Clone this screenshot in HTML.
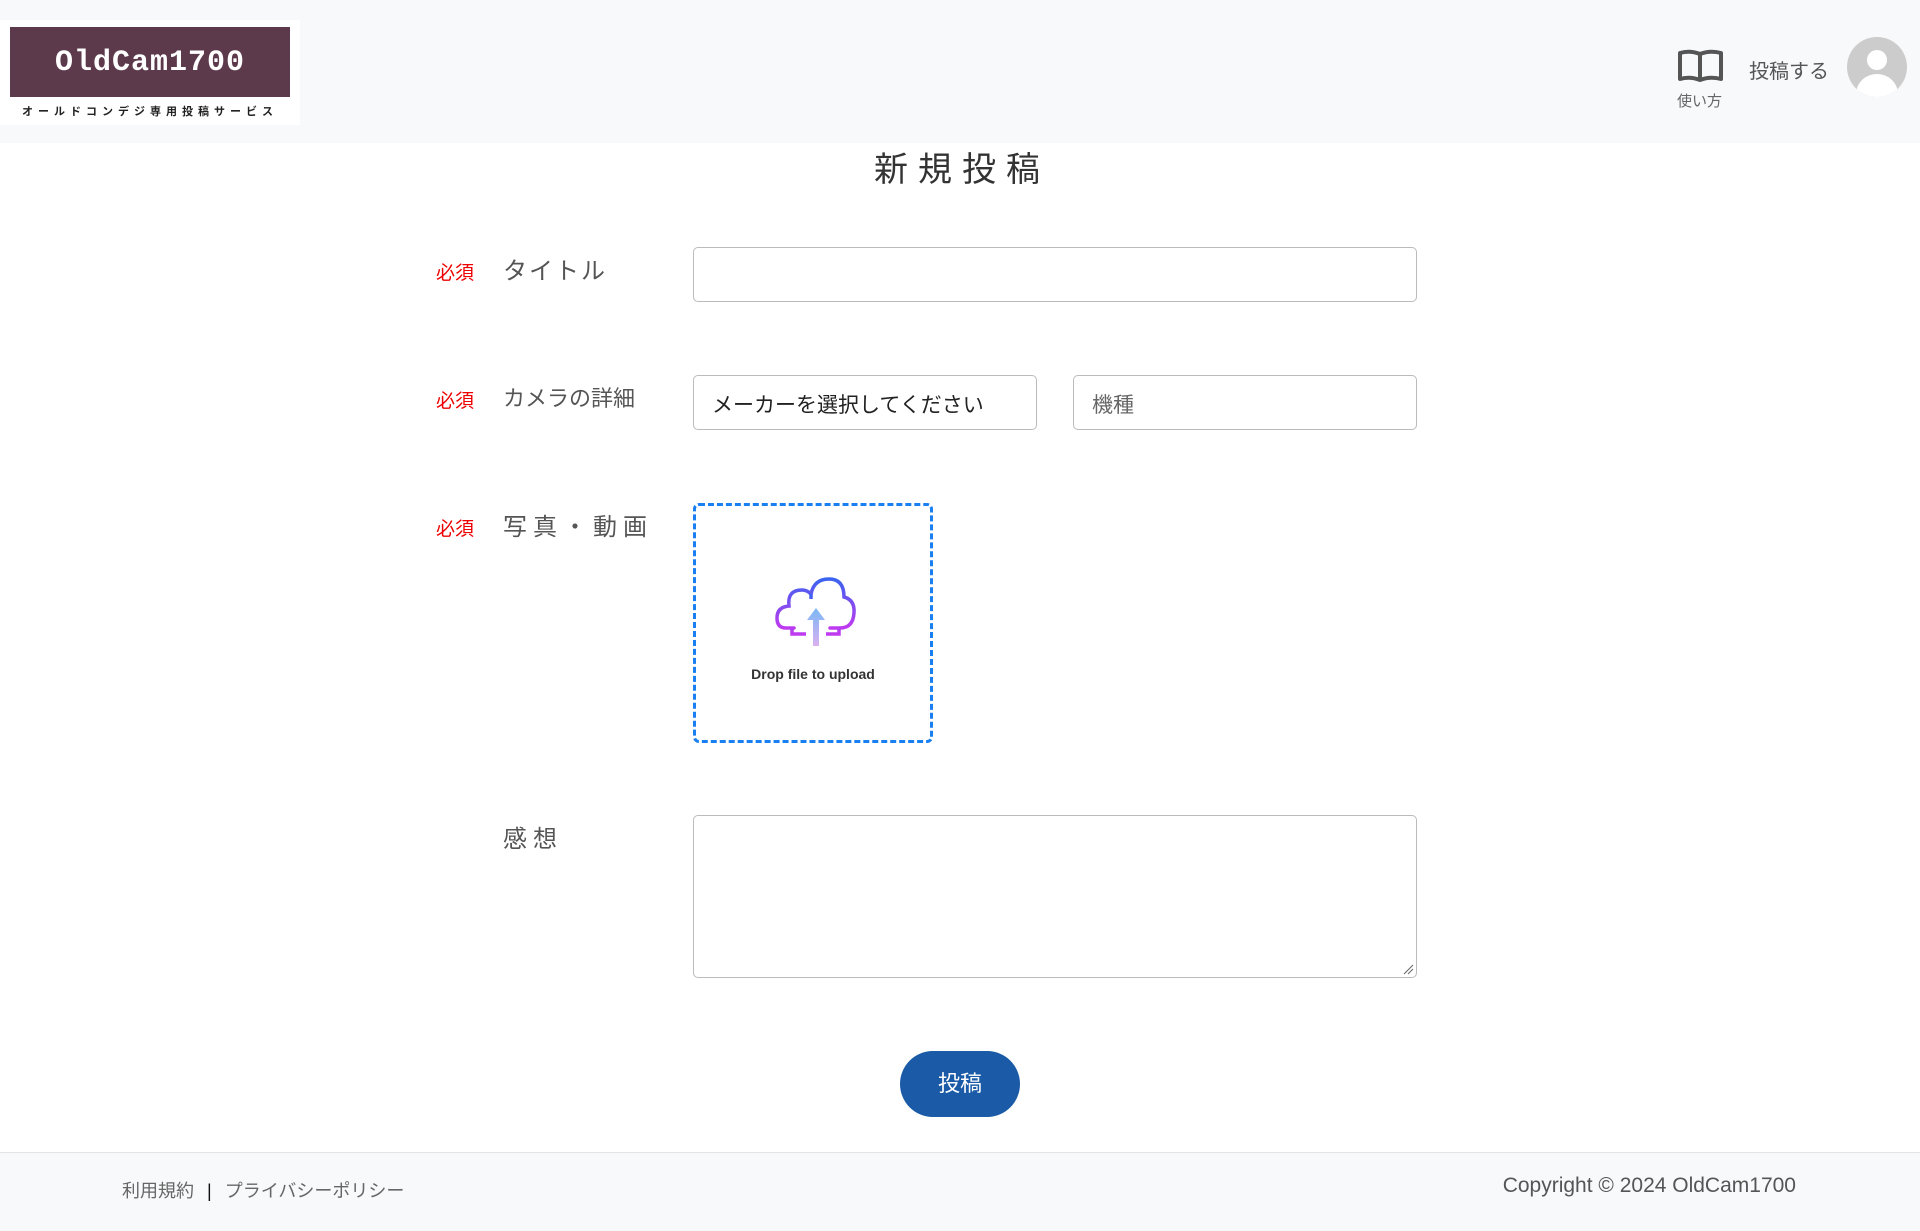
<!DOCTYPE html>
<html><head><meta charset="utf-8"><style>
*{box-sizing:border-box;margin:0;padding:0}
body{width:1920px;height:1231px;background:#fff;font-family:"Liberation Sans","Noto Sans CJK JP",sans-serif;color:#444;position:relative;overflow:hidden}
.abs{position:absolute}
header{position:absolute;left:0;top:0;width:1920px;height:143px;background:#f8f9fa}
.logo{left:0;top:20px;width:300px;height:105px;background:#fff}
.logo .in{position:absolute;left:10px;top:7px;width:280px;height:70px;background:#5c3a4b;color:#fff;font-family:"Liberation Mono",monospace;font-weight:bold;font-size:30px;text-align:center;line-height:72px;letter-spacing:1px}
.logo .sub{position:absolute;left:0;width:300px;top:83px;text-align:center;font-size:11px;font-weight:bold;letter-spacing:5px;color:#222}
.lab{font-size:24px;color:#555;letter-spacing:2px}
.req{font-size:19px;color:#e00}
.inp{border:1px solid #bbb;border-radius:5px;background:#fff}
footer{position:absolute;left:0;top:1152px;width:1920px;height:79px;background:#f8f9fa;border-top:1px solid #e3e3e3}
</style></head><body>
<header>
<div class="abs logo"><div class="in">OldCam1700</div><div class="sub">オールドコンデジ専用投稿サービス</div></div>
<svg class="abs" style="left:1677px;top:49px" width="47" height="34" viewBox="0 0 47 34"><path d="M3 4 Q13 1 23 5 Q33 1 44 4 V30 Q33 27 23 31 Q13 27 3 30 Z M23 5 V31" fill="none" stroke="#555" stroke-width="4" stroke-linejoin="round"/></svg>
<div class="abs" style="left:1677px;top:90px;font-size:15px;color:#666">使い方</div>
<div class="abs" style="left:1749px;top:55px;font-size:20px;color:#555">投稿する</div>
<div class="abs" style="left:1847px;top:37px;width:60px;height:60px;border-radius:50%;background:#ccc;overflow:hidden">
<div class="abs" style="left:20px;top:13px;width:20px;height:20px;border-radius:50%;background:#fff"></div>
<div class="abs" style="left:9px;top:37px;width:42px;height:40px;border-radius:50%;background:#fff"></div></div>
</header>
<div class="abs" style="left:2px;width:1920px;top:142px;text-align:center;font-size:34px;letter-spacing:10px;color:#333">新規投稿</div>

<div class="abs req" style="left:436px;top:258px">必須</div>
<div class="abs lab" style="left:503px;top:251px">タイトル</div>
<div class="abs inp" style="left:693px;top:247px;width:724px;height:55px"></div>

<div class="abs req" style="left:436px;top:386px">必須</div>
<div class="abs lab" style="left:503px;top:381px;letter-spacing:0;font-size:22px">カメラの詳細</div>
<div class="abs inp" style="left:693px;top:375px;width:344px;height:55px;font-size:21px;color:#222;padding:13px 0 0 18px">メーカーを選択してください</div>
<div class="abs inp" style="left:1073px;top:375px;width:344px;height:55px;font-size:21px;color:#666;padding:13px 0 0 18px">機種</div>

<div class="abs req" style="left:436px;top:514px">必須</div>
<div class="abs lab" style="left:503px;top:507px;letter-spacing:6px">写真・動画</div>
<div class="abs" style="left:693px;top:503px;width:240px;height:240px;border:3px dashed #1a7ff0;border-radius:6px">
<svg class="abs" style="left:78px;top:70px" width="84" height="74" viewBox="0 0 84 74"><defs><linearGradient id="g" x1="0" y1="0" x2="0" y2="1"><stop offset="0" stop-color="#3a63f0"/><stop offset="1" stop-color="#c03af0"/></linearGradient><linearGradient id="a" x1="0" y1="0" x2="0" y2="1"><stop offset="0" stop-color="#7ab8f5"/><stop offset="1" stop-color="#dab0f0"/></linearGradient></defs>
<path d="M20 52 H12 Q3 52 3 42 Q3 31 15 30 Q13 14 28 14 Q33 14 37 18 Q40 3 55 3 Q70 3 70 21 Q81 24 80 37 Q79 52 66 52 H56" fill="none" stroke="url(#g)" stroke-width="3.5" stroke-linecap="round"/>
<path d="M37 18 V23 M18 52 V58 H32 M52 58 H65 V52" fill="none" stroke="url(#g)" stroke-width="3.5"/>
<path d="M42 32 L51 44 H45 V70 H39 V44 H33 Z" fill="url(#a)"/></svg>
<div class="abs" style="left:0;width:234px;top:160px;text-align:center;font-size:14px;font-weight:bold;color:#333">Drop file to upload</div>
</div>

<div class="abs lab" style="left:503px;top:819px;letter-spacing:6px">感想</div>
<div class="abs inp" style="left:693px;top:815px;width:724px;height:163px">
<svg class="abs" style="right:2px;bottom:2px" width="12" height="12"><path d="M2 11 L11 2 M6 11 L11 6" stroke="#666" stroke-width="1"/></svg></div>

<div class="abs" style="left:900px;top:1051px;width:120px;height:66px;border-radius:33px;background:#1a5aa6;color:#fff;font-size:22px;text-align:center;line-height:66px">投稿</div>

<footer>
<div class="abs" style="left:122px;top:24px;font-size:18px;color:#666">利用規約 <span style="color:#111;margin:0 8px">|</span> プライバシーポリシー</div>
<div class="abs" style="right:124px;top:21px;font-size:21px;color:#555">Copyright © 2024 OldCam1700</div>
</footer>
</body></html>
